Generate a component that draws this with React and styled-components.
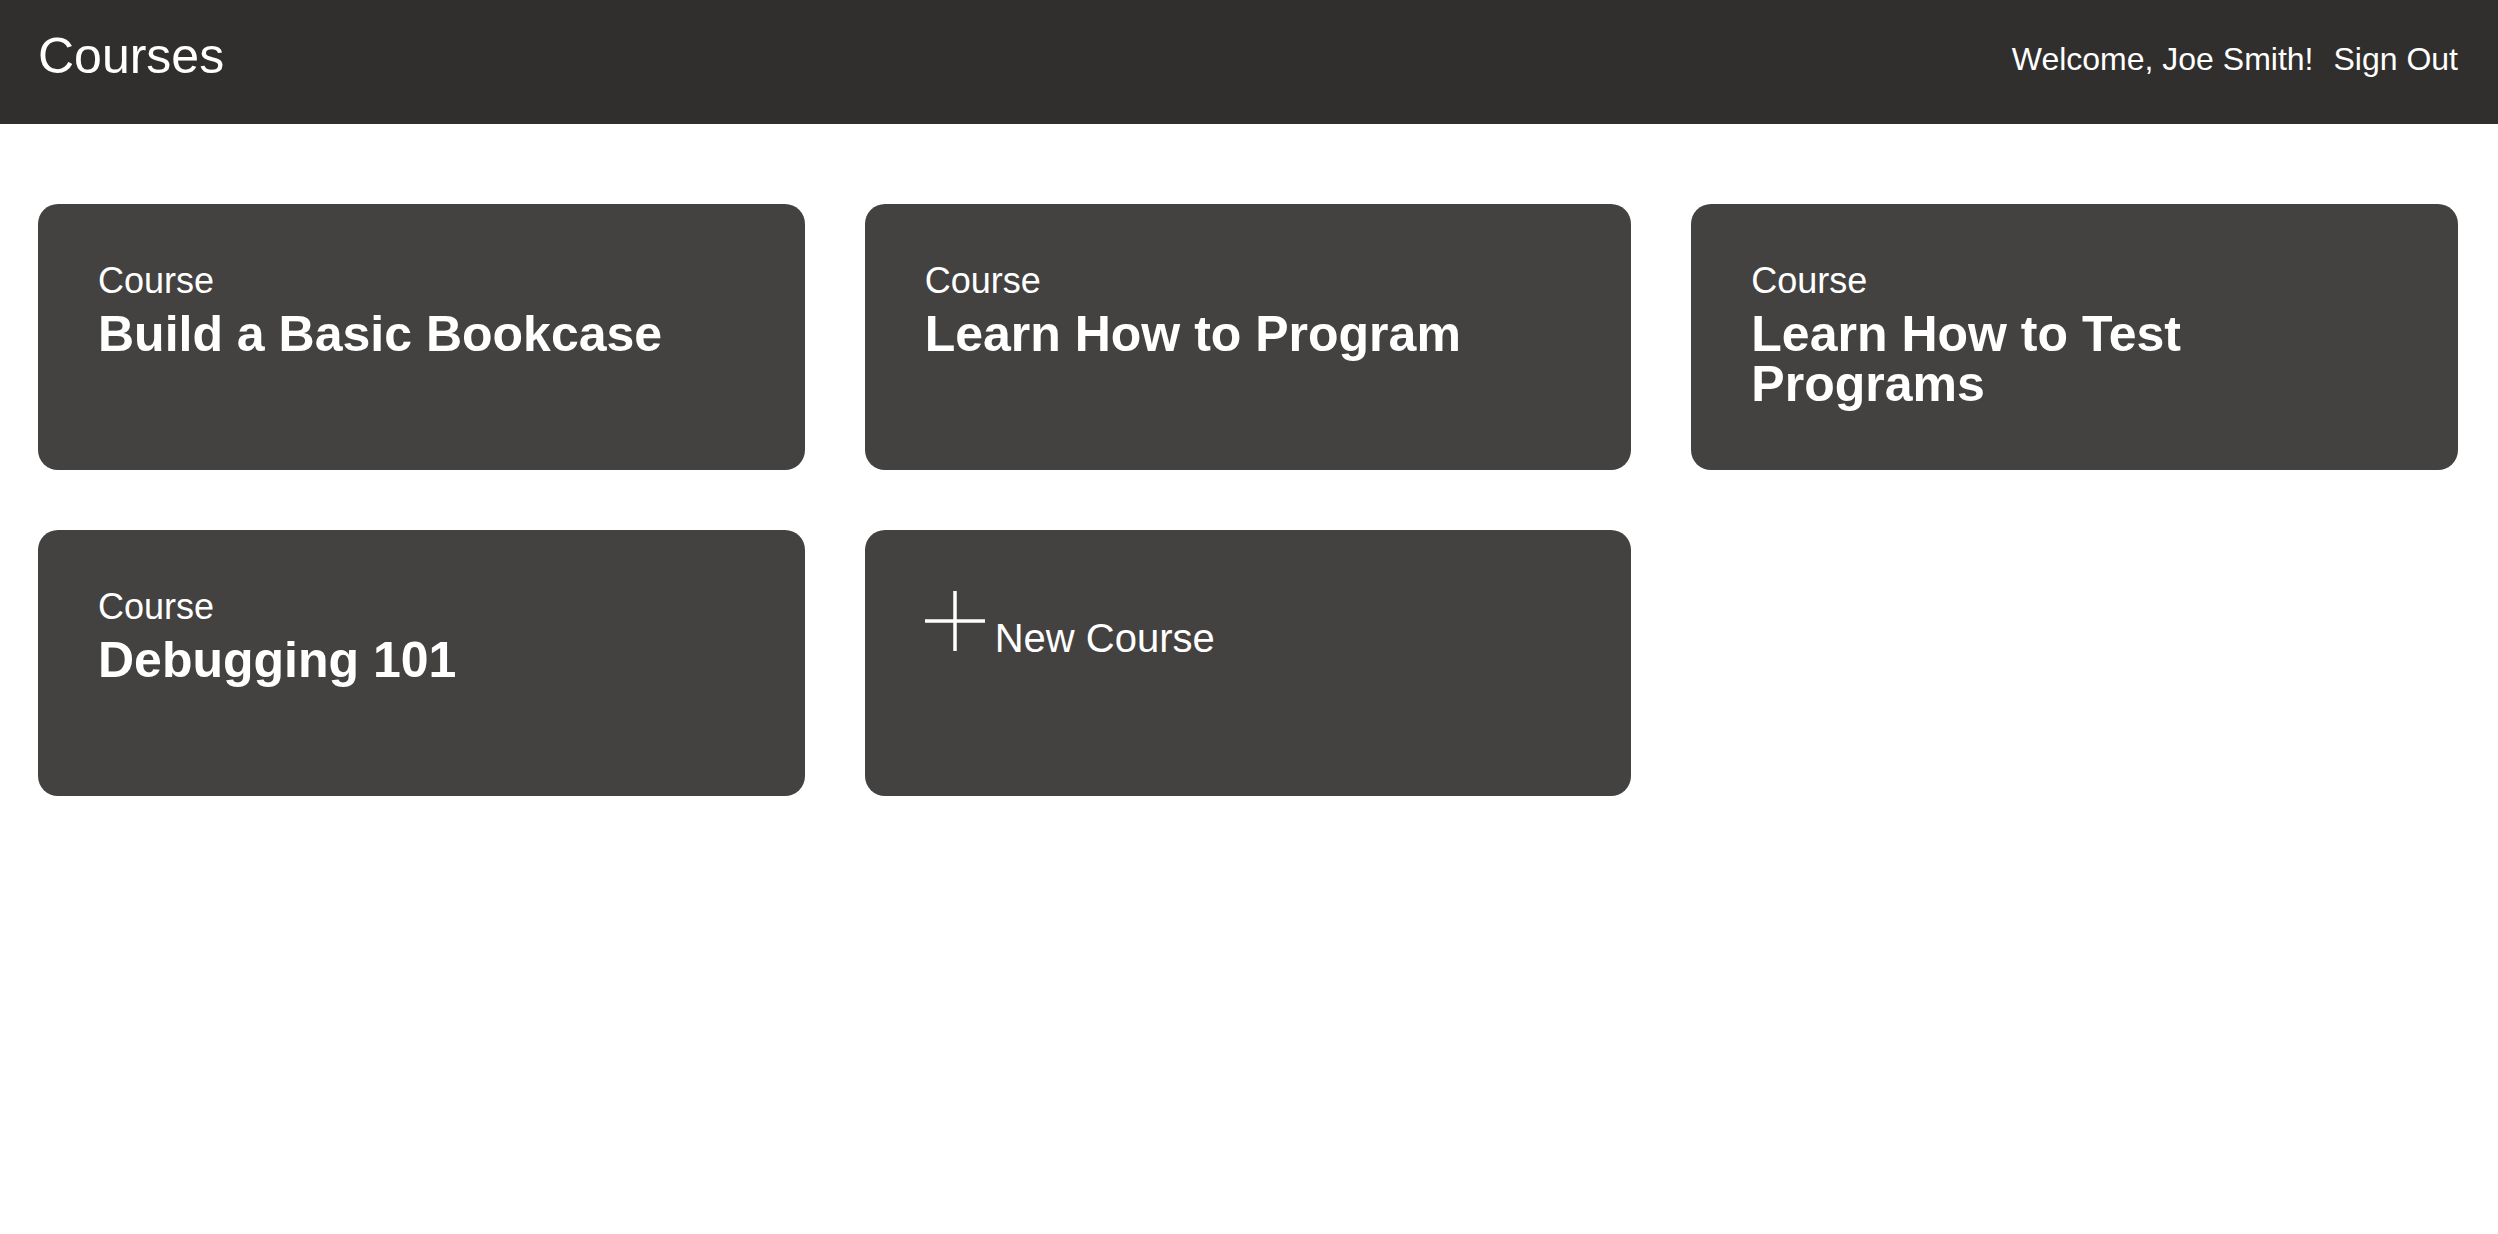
import React from "react";
import styled, { createGlobalStyle } from "styled-components";

const GlobalStyle = createGlobalStyle`
  html, body {
    margin: 0;
    padding: 0;
    background: #ffffff;
  }
  body {
    font-family: "Liberation Sans", Arial, Helvetica, sans-serif;
    color: #ffffff;
  }
  * { box-sizing: border-box; }
`;

const Header = styled.header`
  display: flex;
  align-items: flex-start;
  justify-content: space-between;
  height: 124px;
  padding: 31px 40px 0 38px;
  background: #302f2d;
`;

const Title = styled.h1`
  margin: 0;
  font-size: 50px;
  line-height: 50px;
  font-weight: 400;
  color: #ffffff;
`;

const Nav = styled.nav`
  display: flex;
  align-items: baseline;
  gap: 20px;
  margin-top: 12px;
  font-size: 32px;
  line-height: 32px;
`;

const NavItem = styled.span`
  color: #ffffff;
`;

const NavLink = styled.a`
  color: #ffffff;
  text-decoration: none;
  cursor: pointer;
`;

const Grid = styled.main`
  display: grid;
  grid-template-columns: repeat(3, 1fr);
  column-gap: 60px;
  row-gap: 60px;
  padding: 80px 40px 0 38px;
`;

const Card = styled.a`
  display: flex;
  flex-direction: column;
  height: 266px;
  padding: 59px 60px 0 60px;
  border-radius: 20px;
  background: #434240;
  color: #ffffff;
  text-decoration: none;
`;

const Label = styled.div`
  font-size: 36px;
  line-height: 36px;
  font-weight: 400;
`;

const CourseTitle = styled.h3`
  margin: 10px 0 0 0;
  font-size: 50px;
  line-height: 50px;
  font-weight: 700;
`;

const NewRow = styled.div`
  display: flex;
  align-items: baseline;
  gap: 10px;
  padding-top: 2px;
`;

const NewText = styled.span`
  font-size: 40px;
  line-height: 46px;
  position: relative;
  top: 1px;
`;

const PlusIcon = () => (
  <svg width="60" height="60" viewBox="0 0 60 60" aria-hidden="true">
    <line x1="30" y1="0" x2="30" y2="60" stroke="#ffffff" strokeWidth="3.5" />
    <line x1="0" y1="30" x2="60" y2="30" stroke="#ffffff" strokeWidth="3.5" />
  </svg>
);

const courses = [
  "Build a Basic Bookcase",
  "Learn How to Program",
  "Learn How to Test Programs",
  "Debugging 101",
];

export default function App() {
  return (
    <>
      <GlobalStyle />
      <Header>
        <Title>Courses</Title>
        <Nav>
          <NavItem>Welcome, Joe Smith!</NavItem>
          <NavLink>Sign Out</NavLink>
        </Nav>
      </Header>
      <Grid>
        {courses.map((c) => (
          <Card key={c}>
            <Label>Course</Label>
            <CourseTitle>{c}</CourseTitle>
          </Card>
        ))}
        <Card>
          <NewRow>
            <PlusIcon />
            <NewText>New Course</NewText>
          </NewRow>
        </Card>
      </Grid>
    </>
  );
}
